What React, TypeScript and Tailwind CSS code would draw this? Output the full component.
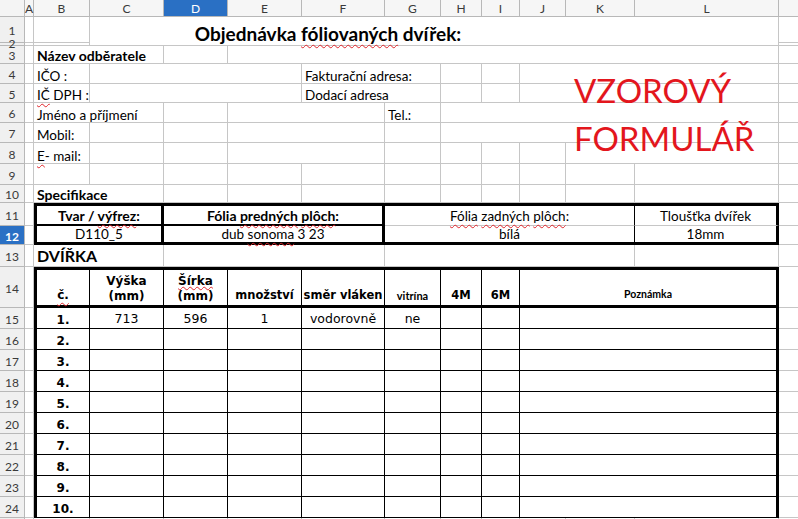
import clsx from "clsx";
import type { ReactNode } from "react";

// gridline + fonts
const G = "border-r border-b border-[#c6c6c6]";
const SANS = "[font-family:Lato,'Liberation_Sans',sans-serif]";
const DV = "[font-family:'DejaVu_Sans',sans-serif]";
const SQ = "underline decoration-wavy decoration-[#e0262b] decoration-1 underline-offset-[3px]";
const TXT = "items-end pl-[3px] text-[13.5px] leading-[14px] text-black";
const BTXT = "items-end pl-[3px] text-[14px] leading-[14px] font-bold text-black";
const BK = "border-black";

function Cell({ cls = "", b = G, children }: { cls?: string; b?: string; children?: ReactNode }) {
  return <div className={clsx("flex min-w-0 whitespace-nowrap", b, cls)}>{children}</div>;
}

function RH({ n, sel, cls = "pt-[3px]" }: { n?: number; sel?: boolean; cls?: string }) {
  return (
    <div
      className={clsx(
        "flex items-center justify-center border-r border-b border-[#b8b8b8] text-[12px] leading-none",
        sel ? "bg-[#2a70c4] text-white font-bold" : "bg-[#f0f0f0] text-[#3a3a3a]",
        cls
      )}
    >
      {n}
    </div>
  );
}

const COLS = ["A", "B", "C", "D", "E", "F", "G", "H", "I", "J", "K", "L", ""];

const rows = [
  { n: 1, v: "713", s: "596", m: "1", d: "vodorovně", vit: "ne" },
  { n: 2 }, { n: 3 }, { n: 4 }, { n: 5 }, { n: 6 }, { n: 7 }, { n: 8 }, { n: 9 }, { n: 10 },
] as { n: number; v?: string; s?: string; m?: string; d?: string; vit?: string }[];

function Singles({ count }: { count: number }) {
  return (
    <>
      {Array.from({ length: count }).map((_, i) => (
        <Cell key={i} />
      ))}
    </>
  );
}

export default function App() {
  const dataCell = "items-center justify-center pt-[3px] text-[12.5px] " + DV;
  const headCell = clsx("border-t-[3px] border-b-[3px] border-r", BK);
  return (
    <div className={clsx("relative w-[798px] h-[519px] overflow-hidden bg-white", SANS)}>
      <div className="grid grid-cols-[25px_9px_56px_74px_64px_74px_83px_56px_41px_38px_46px_69px_144px_60px] grid-rows-[17px_26px_3px_18px_20px_19px_20px_20px_21px_21px_18px_23px_19px_22px_41px_repeat(11,21px)]">
        {/* column header */}
        <div className="border-r border-b border-[#b8b8b8] bg-[#f4f4f4]" />
        {COLS.map((c) => (
          <div
            key={c || "M"}
            className={clsx(
              "flex items-center justify-center border-r border-b border-[#b8b8b8] pt-px text-[12px] leading-none",
              c === "D" ? "bg-[#2a70c4] text-white" : "bg-[#f6f6f6] text-[#3a3a3a]"
            )}
          >
            {c}
          </div>
        ))}

        {/* row 1-2 */}
        <RH n={1} />
        <Cell />
        <Cell />
        <Cell b="border-b border-[#c6c6c6]" cls="col-span-8 row-span-2 items-end justify-center pb-px text-[19px] leading-[20px] font-bold text-black">
          <span>
            Objednávka <span className={SQ}>fóliovaných</span> dvířek:
          </span>
        </Cell>
        <Cell cls="col-span-2 row-span-2" />
        <Cell />
        <RH n={2} cls="relative z-10" />
        <Cell />
        <Cell />
        <Cell />

        {/* row 3 */}
        <RH n={3} />
        <Cell />
        <Cell cls={clsx("col-span-2", BTXT)}>Název odběratele</Cell>
        <Cell />
        <Cell cls="col-span-8" />
        <Cell />

        {/* row 4 */}
        <RH n={4} />
        <Cell />
        <Cell cls={TXT}>IČO :</Cell>
        <Cell cls="col-span-3" />
        <Cell cls={clsx("col-span-2", TXT)}>Fakturační adresa:</Cell>
        <Cell />
        <Cell />
        <Cell cls="col-span-3" />
        <Cell />

        {/* row 5 */}
        <RH n={5} />
        <Cell />
        <Cell cls={TXT}>
          <span>
            <span className={SQ}>IČ</span> DPH :
          </span>
        </Cell>
        <Cell cls="col-span-3" />
        <Cell cls={clsx("col-span-2", TXT)}>Dodací adresa</Cell>
        <Cell />
        <Cell />
        <Cell cls="col-span-3" />
        <Cell />

        {/* row 6 */}
        <RH n={6} />
        <Cell />
        <Cell cls={clsx("col-span-2", TXT)}>Jméno a příjmení</Cell>
        <Cell />
        <Cell cls="col-span-2" />
        <Cell cls={TXT}>Tel.:</Cell>
        <Cell cls="col-span-5" />
        <Cell />

        {/* row 7 */}
        <RH n={7} />
        <Cell />
        <Cell cls={TXT}>Mobil:</Cell>
        <Cell />
        <Cell />
        <Cell cls="col-span-2" />
        <Cell />
        <Cell cls="col-span-5" />
        <Cell />

        {/* row 8 */}
        <RH n={8} />
        <Cell />
        <Cell cls={TXT}>
          <span>
            <span className={SQ}>E</span>- mail:
          </span>
        </Cell>
        <Cell />
        <Cell />
        <Cell cls="col-span-2" />
        <Cell />
        <Cell />
        <Cell />
        <Cell />
        <Cell cls="col-span-2" />
        <Cell />

        {/* row 9 */}
        <RH n={9} />
        <Singles count={13} />

        {/* row 10 */}
        <RH n={10} />
        <Cell />
        <Cell cls={clsx("col-span-2", BTXT)}>Specifikace</Cell>
        <Singles count={10} />

        {/* row 11 */}
        <RH n={11} />
        <Cell />
        <Cell b={clsx("border-l-[3px] border-t-[3px] border-r-[3px] border-b-2", BK)} cls="col-span-2 items-center justify-center pt-px text-[14px] font-bold">
          <span>
            Tvar / <span className={SQ}>výfrez</span>:
          </span>
        </Cell>
        <Cell b={clsx("border-t-[3px] border-r-[3px] border-b-2", BK)} cls="col-span-3 items-center justify-center pt-px text-[14px] font-bold">
          <span>
            Fólia <span className={SQ}>predných</span> <span className={SQ}>plôch</span>:
          </span>
        </Cell>
        <Cell b="border-t-[3px] border-t-black border-r border-r-black border-b border-b-[#c6c6c6]" cls="col-span-5 items-center justify-center pt-px text-[13.5px]">
          <span>
            <span className={SQ}>Fólia</span> <span className={SQ}>zadných</span> <span className={SQ}>plôch</span>:
          </span>
        </Cell>
        <Cell b="border-t-[3px] border-t-black border-r-[3px] border-r-black border-b border-b-[#c6c6c6]" cls="items-center justify-center pt-px text-[13.5px]">
          Tloušťka dvířek
        </Cell>
        <Cell />

        {/* row 12 */}
        <RH n={12} sel />
        <Cell />
        <Cell b={clsx("border-l-[3px] border-r-[3px] border-b-[3px]", BK)} cls="col-span-2 items-center justify-center pt-px text-[13.5px]">
          D110_5
        </Cell>
        <Cell b={clsx("border-r-[3px] border-b-[3px]", BK)} cls="col-span-3 items-center justify-center pt-px text-[13.5px]">
          <span>
            dub <span className={SQ}>sonoma</span> 3 23
          </span>
        </Cell>
        <Cell b={clsx("border-r border-b-[3px]", BK)} cls="col-span-5 items-center justify-center pt-px text-[13.5px]">
          bílá
        </Cell>
        <Cell b={clsx("border-r-[3px] border-b-[3px]", BK)} cls="items-center justify-center pt-px text-[13.5px]">
          18mm
        </Cell>
        <Cell />

        {/* row 13 */}
        <RH n={13} />
        <Cell />
        <Cell cls="col-span-2 items-end pl-[3px] text-[16px] leading-[20px] font-bold text-black">DVÍŘKA</Cell>
        <Cell cls="col-span-3" />
        <Cell cls="col-span-5" />
        <Cell />
        <Cell />

        {/* row 14: table header */}
        <RH n={14} />
        <Cell />
        <Cell b={clsx("border-l-[3px] border-t-[3px] border-b-[3px] border-r", BK)} cls={clsx("items-end justify-center pb-px text-[12px] font-bold", DV)}>
          <span className={SQ}>č.</span>
        </Cell>
        <Cell b={headCell} cls={clsx("items-end justify-center pb-px text-[12px] leading-[15px] font-bold text-center", DV)}>
          <span>
            Výška
            <br />
            (mm)
          </span>
        </Cell>
        <Cell b={headCell} cls={clsx("items-end justify-center pb-px text-[12px] leading-[15px] font-bold text-center", DV)}>
          <span>
            <span className="underline decoration-wavy decoration-[#e0262b] decoration-1 underline-offset-[1px]">Šírka</span>
            <br />
            (mm)
          </span>
        </Cell>
        <Cell b={headCell} cls={clsx("items-end justify-center pb-px text-[11.5px] font-bold", DV)}>
          množství
        </Cell>
        <Cell b={headCell} cls={clsx("items-end justify-center pb-px text-[11.5px] font-bold", DV)}>
          směr vláken
        </Cell>
        <Cell b={headCell} cls="items-end justify-center pb-px text-[11px] font-bold">
          vitrína
        </Cell>
        <Cell b={headCell} cls={clsx("items-end justify-center pb-px text-[11.5px] font-bold", DV)}>
          4M
        </Cell>
        <Cell b={headCell} cls={clsx("items-end justify-center pb-px text-[11.5px] font-bold", DV)}>
          6M
        </Cell>
        <Cell b={clsx("border-t-[3px] border-b-[3px] border-r-[3px]", BK)} cls="col-span-3 items-end justify-center pb-[2px] text-[10.5px] font-bold">
          Poznámka
        </Cell>
        <Cell />

        {/* rows 15-24 */}
        {rows.map((r) => (
          <div key={r.n} className="contents">
            <RH n={r.n + 14} />
            <Cell />
            <Cell b={clsx("border-l-[3px] border-r border-b", BK)} cls={clsx("items-center justify-center pt-[3px] text-[12px] font-bold", DV)}>
              {r.n}.
            </Cell>
            <Cell b={clsx("border-r border-b", BK)} cls={dataCell}>{r.v}</Cell>
            <Cell b={clsx("border-r border-b", BK)} cls={dataCell}>{r.s}</Cell>
            <Cell b={clsx("border-r border-b", BK)} cls={dataCell}>{r.m}</Cell>
            <Cell b={clsx("border-r border-b", BK)} cls={dataCell}>{r.d}</Cell>
            <Cell b={clsx("border-r border-b", BK)} cls={dataCell}>{r.vit}</Cell>
            <Cell b={clsx("border-r border-b", BK)} />
            <Cell b={clsx("border-r border-b", BK)} />
            <Cell b={clsx("border-r-[3px] border-b", BK)} cls="col-span-3" />
            <Cell />
          </div>
        ))}

        {/* row 25 (cut off by the window) */}
        <RH />
        <Singles count={13} />
      </div>

      {/* floating text box over the sheet */}
      <div className="pointer-events-none absolute left-[574px] top-[66px] text-[33px] leading-[48px] text-[#e3161d]">
        VZOROVÝ
        <br />
        FORMULÁŘ
      </div>
    </div>
  );
}
